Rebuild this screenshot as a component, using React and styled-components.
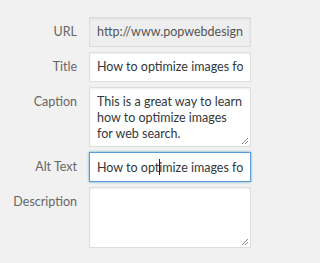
import React from 'react';
import styled, { createGlobalStyle } from 'styled-components';

const GlobalStyle = createGlobalStyle`
	html, body {
		margin: 0;
		padding: 0;
		background: #f1f1f1;
	}
	body {
		font-family: Lato, "Noto Sans", sans-serif;
		font-size: 12.5px;
		color: #32373c;
	}
`;

const Panel = styled.div`
	width: 270px;
	height: 263px;
	box-sizing: border-box;
	padding-top: 17px;
	background: #f1f1f1;
`;

const Form = styled.div`
	display: grid;
	grid-template-columns: 77px 162px;
	column-gap: 12px;
	row-gap: 5px;
`;

const Label = styled.label`
	text-align: right;
	color: #666;
	font-size: 12.5px;
	line-height: 16px;
	padding-top: 7px;
	white-space: nowrap;
`;

const Field = styled.div`
	box-sizing: border-box;
	height: ${props => props.$height || 30}px;
	padding: 6px 7px;
	background: ${props => (props.$readonly ? '#eee' : '#fff')};
	border: 1px solid ${props => (props.$focus ? '#5b9dd9' : '#ddd')};
	box-shadow: ${props =>
		props.$focus
			? '0 0 2px rgba(30, 140, 190, 0.8)'
			: 'inset 0 1px 2px rgba(0, 0, 0, 0.07)'};
	color: ${props => (props.$readonly ? '#555' : '#32373c')};
	font-size: 12.5px;
	line-height: 16px;
	position: relative;
`;

const Value = styled.div`
	overflow: hidden;
	white-space: nowrap;
`;

const Caret = styled.span`
	display: inline-block;
	width: 1px;
	height: 16px;
	margin: 0 -1px 0 0;
	vertical-align: -3px;
	background: #222;
`;

const Grip = styled.svg`
	position: absolute;
	right: 1px;
	bottom: 1px;
`;

const Resize = () => (
	<Grip width="9" height="9" viewBox="0 0 9 9">
		<path d="M8 2 L2 8 M8 5 L5 8" stroke="#888" strokeWidth="1" fill="none" />
	</Grip>
);

export default function App() {
	return (
		<Panel>
			<GlobalStyle />
			<Form>
				<Label>URL</Label>
				<Field $readonly>
					<Value>http://www.popwebdesign.net/optimize-images</Value>
				</Field>

				<Label>Title</Label>
				<Field>
					<Value>How to optimize images for web search</Value>
				</Field>

				<Label>Caption</Label>
				<Field $height={60}>
					<Value>
						This is a great way to learn
						<br />
						how to optimize images
						<br />
						for web search.
					</Value>
					<Resize />
				</Field>

				<Label>Alt Text</Label>
				<Field $focus>
					<Value>
						How to opt<Caret />imize images for web search
					</Value>
				</Field>

				<Label>Description</Label>
				<Field $height={61}>
					<Resize />
				</Field>
			</Form>
		</Panel>
	);
}
